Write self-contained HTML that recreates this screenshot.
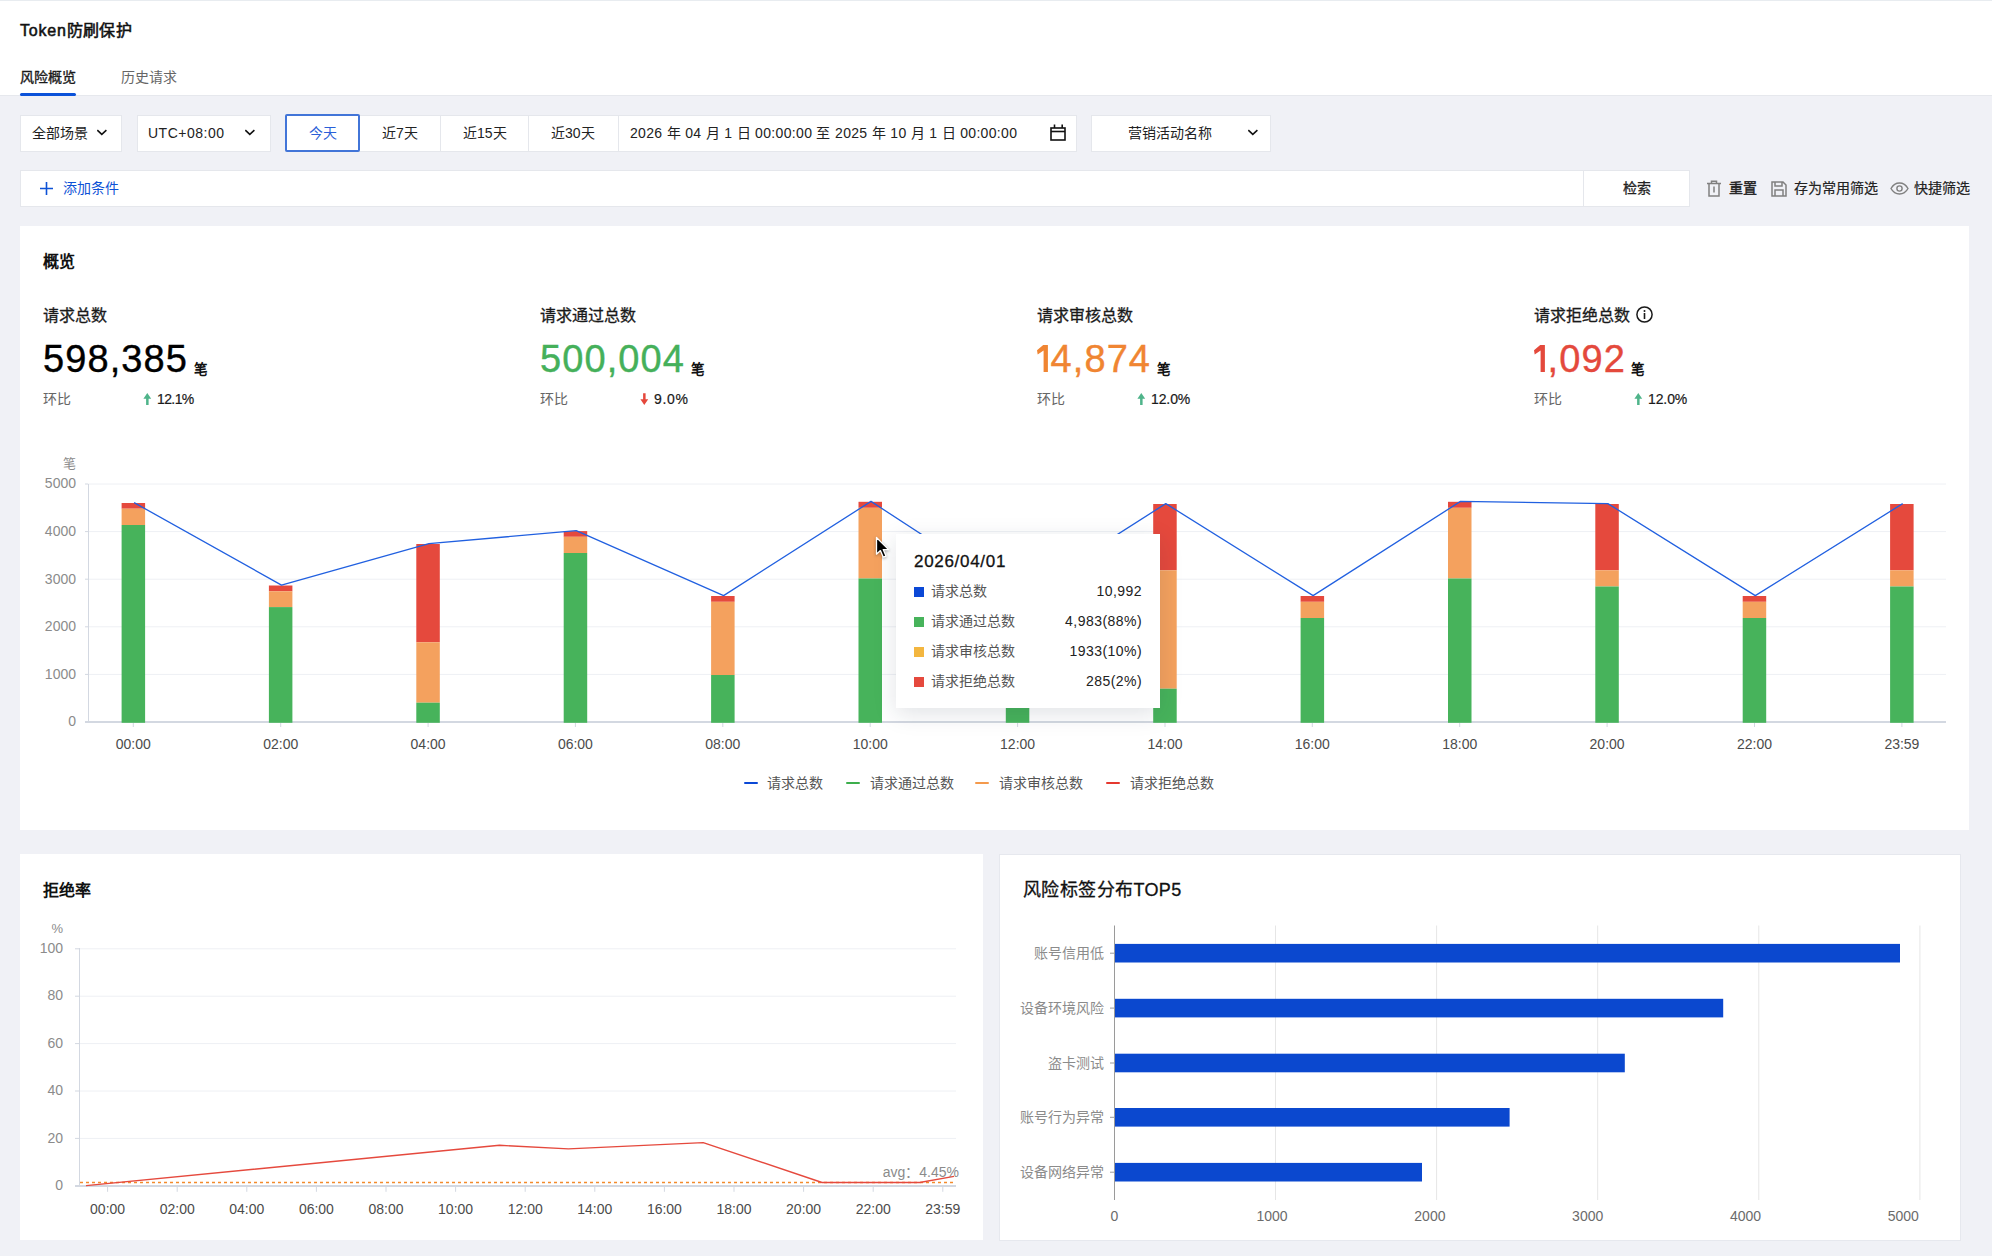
<!DOCTYPE html>
<html lang="zh-CN"><head><meta charset="utf-8"><title>Token防刷保护</title>
<style>
*{box-sizing:border-box;margin:0;padding:0}
html,body{width:1992px;height:1256px;overflow:hidden}
body{background:#f0f1f6;font-family:"Liberation Sans", sans-serif;color:rgba(0,0,0,.9);font-size:14px;position:relative}
.ab{position:absolute}
.t{position:absolute;white-space:nowrap;line-height:1}
.box{position:absolute;background:#fff;border:1px solid #e5e7ec}
.card{position:absolute;background:#fff}
.md{-webkit-text-stroke:0.3px currentColor}
svg text{font-family:"Liberation Sans", sans-serif}
</style></head><body>
<div class="ab" style="left:0;top:0;width:1992px;height:96px;background:#fff;border-top:1px solid #e8ecf0;border-bottom:1px solid #e6e8ed"></div>
<div class="t" style="left:20px;top:22.5px;font-size:16px;color:#111;-webkit-text-stroke:0.55px #111"><span style="letter-spacing:0.8px">Token</span><span style="letter-spacing:0.3px">防刷保护</span></div>
<div class="t" style="left:20px;top:70px;font-size:14px;color:#1a1a1a;-webkit-text-stroke:0.35px #1a1a1a">风险概览</div>
<div class="ab" style="left:19.5px;top:93px;width:56px;height:3px;background:#0b52d9;border-radius:1.5px"></div>
<div class="t" style="left:121px;top:70px;font-size:14px;color:#666">历史请求</div>

<div class="box" style="left:20px;top:115px;width:102px;height:37px"></div>
<div class="t" style="left:32px;top:126px;color:#222">全部场景</div>
<svg class="ab" style="left:96.5px;top:129px" width="11" height="7" viewBox="0 0 11 7"><path d="M0.3 1.2 L4.8 5.3 L9.4 1.2" fill="none" stroke="#111" stroke-width="1.6"/></svg>
<div class="box" style="left:137px;top:115px;width:134px;height:37px"></div>
<div class="t" style="left:148px;top:126px;color:#222;letter-spacing:0.5px">UTC+08:00</div>
<svg class="ab" style="left:244.5px;top:129px" width="11" height="7" viewBox="0 0 11 7"><path d="M0.3 1.2 L4.8 5.3 L9.4 1.2" fill="none" stroke="#111" stroke-width="1.6"/></svg>

<div class="box" style="left:285px;top:115px;width:792px;height:37px"></div>
<div class="ab" style="left:440px;top:116px;width:1px;height:35px;background:#e5e7ec"></div>
<div class="ab" style="left:528px;top:116px;width:1px;height:35px;background:#e5e7ec"></div>
<div class="ab" style="left:618px;top:116px;width:1px;height:35px;background:#e5e7ec"></div>
<div class="ab" style="left:285px;top:114px;width:75px;height:38px;border:2px solid #4275d8;border-radius:2px"></div>
<div class="t" style="left:309px;top:126px;color:#2a5fd8">今天</div>
<div class="t" style="left:382px;top:126px;color:#222">近7天</div>
<div class="t" style="left:463px;top:126px;color:#222">近15天</div>
<div class="t" style="left:551px;top:126px;color:#222">近30天</div>
<div class="t" style="left:630px;top:126px;color:#222;letter-spacing:0.33px">2026 年 04 月 1 日 00:00:00 至 2025 年 10 月 1 日 00:00:00</div>
<svg class="ab" style="left:1050px;top:124px" width="16" height="17" viewBox="0 0 16 17"><rect x="1" y="4" width="14" height="12" fill="none" stroke="#111" stroke-width="1.6"/><line x1="1" y1="7.5" x2="15" y2="7.5" stroke="#111" stroke-width="1.6"/><line x1="4.5" y1="0.5" x2="4.5" y2="4" stroke="#111" stroke-width="1.6"/><line x1="12.2" y1="0.5" x2="12.2" y2="4" stroke="#111" stroke-width="1.6"/></svg>

<div class="box" style="left:1091px;top:115px;width:180px;height:37px"></div>
<div class="t" style="left:1128px;top:126px;color:#222">营销活动名称</div>
<svg class="ab" style="left:1247.5px;top:129px" width="11" height="7" viewBox="0 0 11 7"><path d="M0.3 1.2 L4.8 5.3 L9.4 1.2" fill="none" stroke="#111" stroke-width="1.6"/></svg>

<div class="box" style="left:20px;top:170px;width:1670px;height:37px"></div>
<div class="ab" style="left:1583px;top:171px;width:1px;height:35px;background:#e5e7ec"></div>
<svg class="ab" style="left:40px;top:182px" width="13" height="13" viewBox="0 0 13 13"><path d="M6.5 0V13M0 6.5H13" stroke="#0d52d6" stroke-width="1.6"/></svg>
<div class="t" style="left:63px;top:181px;color:#0d52d6">添加条件</div>
<div class="t md" style="left:1623px;top:181px;color:#222">检索</div>
<svg class="ab" style="left:1706px;top:180px" width="16" height="17" viewBox="0 0 16 17"><path d="M1 3.5H15M5.5 3.5V1.2H10.5V3.5M3 3.5V16H13V3.5M8 6.5V12.5" fill="none" stroke="#808080" stroke-width="1.5"/></svg>
<div class="t md" style="left:1729px;top:181px;color:#222;-webkit-text-stroke:0.45px">重置</div>
<svg class="ab" style="left:1771px;top:181px" width="16" height="16" viewBox="0 0 16 16"><path d="M1 1H12L15 4V15H1Z M4 1V5H11V1 M4 15V9H12V15" fill="none" stroke="#808080" stroke-width="1.5"/></svg>
<div class="t md" style="left:1794px;top:181px;color:#222;-webkit-text-stroke:0.2px">存为常用筛选</div>
<svg class="ab" style="left:1890px;top:182px" width="19" height="13" viewBox="0 0 19 13"><path d="M1 6.5C3.5 2 6.5 1 9.5 1S15.5 2 18 6.5C15.5 11 12.5 12 9.5 12S3.5 11 1 6.5Z" fill="none" stroke="#808080" stroke-width="1.4"/><circle cx="9.5" cy="6.5" r="2.6" fill="none" stroke="#808080" stroke-width="1.4"/></svg>
<div class="t md" style="left:1914px;top:181px;color:#222;-webkit-text-stroke:0.2px">快捷筛选</div>

<div class="card" style="left:20px;top:226px;width:1949px;height:604px"></div>
<div class="t" style="left:43px;top:253.5px;font-size:16px;font-weight:700;color:#111">概览</div>
<div class="t md" style="left:43px;top:307.5px;font-size:16px;color:#1a1a1a">请求总数</div>
<div class="t" style="left:43px;top:338px;font-size:38px;color:#000;letter-spacing:1.1px;-webkit-text-stroke:0.4px #000;top:340px"><span>598,385</span><span style="font-size:13.5px;font-weight:700;color:#111;margin-left:5.5px;position:relative;top:1.5px;letter-spacing:0;-webkit-text-stroke:0">笔</span></div>
<div class="t" style="left:43px;top:392px;color:#666">环比</div>
<svg class="ab" style="left:143px;top:393px" width="9" height="13" viewBox="0 0 9 13"><path d="M4.3 0.1L8.2 5.8H5.6V12H3.1V5.8H0.4Z" fill="#4fb48a"/></svg>
<div class="t md" style="left:157px;top:391.5px;color:#1a1a1a;-webkit-text-stroke:0.2px;letter-spacing:-0.6px">12.1%</div>
<div class="t md" style="left:540px;top:307.5px;font-size:16px;color:#1a1a1a">请求通过总数</div>
<div class="t" style="left:540px;top:338px;font-size:38px;color:#45b05a;letter-spacing:1.1px;-webkit-text-stroke:0.4px #45b05a;top:340px"><span>500,004</span><span style="font-size:13.5px;font-weight:700;color:#111;margin-left:5.5px;position:relative;top:1.5px;letter-spacing:0;-webkit-text-stroke:0">笔</span></div>
<div class="t" style="left:540px;top:392px;color:#666">环比</div>
<svg class="ab" style="left:640px;top:393px" width="9" height="13" viewBox="0 0 9 13"><path d="M4.3 12L8.2 6.3H5.6V0.2H3.1V6.3H0.4Z" fill="#e5483c"/></svg>
<div class="t md" style="left:654px;top:391.5px;color:#1a1a1a;-webkit-text-stroke:0.2px;letter-spacing:0.7px">9.0%</div>
<div class="t md" style="left:1037px;top:307.5px;font-size:16px;color:#1a1a1a">请求审核总数</div>
<div class="t" style="left:1037px;top:338px;font-size:38px;color:#f08532;letter-spacing:1.1px;-webkit-text-stroke:0.4px #f08532;top:340px"><span><svg width="14.6" height="27.2" viewBox="0 0 14.6 27.2" style="display:inline-block;vertical-align:baseline;margin-right:-1.1px"><path d="M6.2 0H10.9V27.2H6.6V5.6L0.7 9.4L0 5.3Z" fill="#f08532"/></svg>4,874</span><span style="font-size:13.5px;font-weight:700;color:#111;margin-left:5.5px;position:relative;top:1.5px;letter-spacing:0;-webkit-text-stroke:0">笔</span></div>
<div class="t" style="left:1037px;top:392px;color:#666">环比</div>
<svg class="ab" style="left:1137px;top:393px" width="9" height="13" viewBox="0 0 9 13"><path d="M4.3 0.1L8.2 5.8H5.6V12H3.1V5.8H0.4Z" fill="#4fb48a"/></svg>
<div class="t md" style="left:1151px;top:391.5px;color:#1a1a1a;-webkit-text-stroke:0.2px;letter-spacing:-0.1px">12.0%</div>
<div class="t md" style="left:1534px;top:307.5px;font-size:16px;color:#1a1a1a">请求拒绝总数</div>
<div class="t" style="left:1534px;top:338px;font-size:38px;color:#e4493c;letter-spacing:1.1px;-webkit-text-stroke:0.4px #e4493c;top:340px"><span><svg width="14.6" height="27.2" viewBox="0 0 14.6 27.2" style="display:inline-block;vertical-align:baseline;margin-right:-1.1px"><path d="M6.2 0H10.9V27.2H6.6V5.6L0.7 9.4L0 5.3Z" fill="#e4493c"/></svg>,092</span><span style="font-size:13.5px;font-weight:700;color:#111;margin-left:5.5px;position:relative;top:1.5px;letter-spacing:0;-webkit-text-stroke:0">笔</span></div>
<div class="t" style="left:1534px;top:392px;color:#666">环比</div>
<svg class="ab" style="left:1634px;top:393px" width="9" height="13" viewBox="0 0 9 13"><path d="M4.3 0.1L8.2 5.8H5.6V12H3.1V5.8H0.4Z" fill="#4fb48a"/></svg>
<div class="t md" style="left:1648px;top:391.5px;color:#1a1a1a;-webkit-text-stroke:0.2px;letter-spacing:-0.1px">12.0%</div>
<svg class="ab" style="left:1636px;top:306px" width="17" height="17" viewBox="0 0 17 17"><circle cx="8.5" cy="8.5" r="7.6" fill="none" stroke="#1a1a1a" stroke-width="1.5"/><circle cx="8.5" cy="5" r="1" fill="#1a1a1a"/><rect x="7.7" y="7" width="1.6" height="6" fill="#1a1a1a"/></svg>
<svg class="ab" style="left:0;top:0" width="1992" height="1256"><line x1="88" y1="674.4" x2="1946" y2="674.4" stroke="#eef0f4" stroke-width="1"/><line x1="85" y1="674.4" x2="88" y2="674.4" stroke="#d3d8e1" stroke-width="1"/><text x="76" y="678.7" text-anchor="end" font-size="14" fill="#8b8b8b">1000</text><line x1="88" y1="626.8" x2="1946" y2="626.8" stroke="#eef0f4" stroke-width="1"/><line x1="85" y1="626.8" x2="88" y2="626.8" stroke="#d3d8e1" stroke-width="1"/><text x="76" y="631.1" text-anchor="end" font-size="14" fill="#8b8b8b">2000</text><line x1="88" y1="579.2" x2="1946" y2="579.2" stroke="#eef0f4" stroke-width="1"/><line x1="85" y1="579.2" x2="88" y2="579.2" stroke="#d3d8e1" stroke-width="1"/><text x="76" y="583.5" text-anchor="end" font-size="14" fill="#8b8b8b">3000</text><line x1="88" y1="531.6" x2="1946" y2="531.6" stroke="#eef0f4" stroke-width="1"/><line x1="85" y1="531.6" x2="88" y2="531.6" stroke="#d3d8e1" stroke-width="1"/><text x="76" y="535.9" text-anchor="end" font-size="14" fill="#8b8b8b">4000</text><line x1="88" y1="484.0" x2="1946" y2="484.0" stroke="#eef0f4" stroke-width="1"/><line x1="85" y1="484.0" x2="88" y2="484.0" stroke="#d3d8e1" stroke-width="1"/><text x="76" y="488.3" text-anchor="end" font-size="14" fill="#8b8b8b">5000</text><text x="76" y="726.3" text-anchor="end" font-size="14" fill="#8b8b8b">0</text><text x="76" y="468" text-anchor="end" font-size="13" fill="#8b8b8b">笔</text><line x1="88.5" y1="484" x2="88.5" y2="722.0" stroke="#d3d8e1" stroke-width="1"/><line x1="85" y1="722.0" x2="1946" y2="722.0" stroke="#d3d8e1" stroke-width="2"/><rect x="121.6" y="503.0" width="23.5" height="5.7" fill="#e5493d"/><rect x="121.6" y="508.7" width="23.5" height="16.3" fill="#f4a15e"/><rect x="121.6" y="525.0" width="23.5" height="197.8" fill="#47b35b"/><rect x="268.9" y="585.5" width="23.5" height="5.8" fill="#e5493d"/><rect x="268.9" y="591.3" width="23.5" height="15.8" fill="#f4a15e"/><rect x="268.9" y="607.1" width="23.5" height="115.7" fill="#47b35b"/><rect x="416.3" y="544.0" width="23.5" height="98.3" fill="#e5493d"/><rect x="416.3" y="642.3" width="23.5" height="60.4" fill="#f4a15e"/><rect x="416.3" y="702.7" width="23.5" height="20.1" fill="#47b35b"/><rect x="563.7" y="531.1" width="23.5" height="5.7" fill="#e5493d"/><rect x="563.7" y="536.8" width="23.5" height="16.2" fill="#f4a15e"/><rect x="563.7" y="553.0" width="23.5" height="169.8" fill="#47b35b"/><rect x="711.1" y="596.0" width="23.5" height="5.8" fill="#e5493d"/><rect x="711.1" y="601.8" width="23.5" height="73.2" fill="#f4a15e"/><rect x="711.1" y="675.0" width="23.5" height="47.8" fill="#47b35b"/><rect x="858.5" y="501.8" width="23.5" height="6.0" fill="#e5493d"/><rect x="858.5" y="507.8" width="23.5" height="70.7" fill="#f4a15e"/><rect x="858.5" y="578.5" width="23.5" height="144.3" fill="#47b35b"/><rect x="1005.8" y="598.0" width="23.5" height="6.0" fill="#e5493d"/><rect x="1005.8" y="604.0" width="23.5" height="36.0" fill="#f4a15e"/><rect x="1005.8" y="640.0" width="23.5" height="82.8" fill="#47b35b"/><rect x="1153.2" y="504.0" width="23.5" height="66.3" fill="#e5493d"/><rect x="1153.2" y="570.3" width="23.5" height="118.4" fill="#f4a15e"/><rect x="1153.2" y="688.7" width="23.5" height="34.1" fill="#47b35b"/><rect x="1300.6" y="596.0" width="23.5" height="5.8" fill="#e5493d"/><rect x="1300.6" y="601.8" width="23.5" height="16.2" fill="#f4a15e"/><rect x="1300.6" y="618.0" width="23.5" height="104.8" fill="#47b35b"/><rect x="1448.0" y="501.8" width="23.5" height="6.0" fill="#e5493d"/><rect x="1448.0" y="507.8" width="23.5" height="70.7" fill="#f4a15e"/><rect x="1448.0" y="578.5" width="23.5" height="144.3" fill="#47b35b"/><rect x="1595.3" y="504.0" width="23.5" height="66.3" fill="#e5493d"/><rect x="1595.3" y="570.3" width="23.5" height="16.2" fill="#f4a15e"/><rect x="1595.3" y="586.5" width="23.5" height="136.3" fill="#47b35b"/><rect x="1742.7" y="596.0" width="23.5" height="5.8" fill="#e5493d"/><rect x="1742.7" y="601.8" width="23.5" height="16.2" fill="#f4a15e"/><rect x="1742.7" y="618.0" width="23.5" height="104.8" fill="#47b35b"/><rect x="1890.1" y="504.0" width="23.5" height="66.3" fill="#e5493d"/><rect x="1890.1" y="570.3" width="23.5" height="16.2" fill="#f4a15e"/><rect x="1890.1" y="586.5" width="23.5" height="136.3" fill="#47b35b"/><line x1="133.3" y1="723.0" x2="133.3" y2="727.0" stroke="#d3d8e1" stroke-width="1"/><text x="133.3" y="748.5" text-anchor="middle" font-size="14" fill="#4b4b4b">00:00</text><line x1="280.7" y1="723.0" x2="280.7" y2="727.0" stroke="#d3d8e1" stroke-width="1"/><text x="280.7" y="748.5" text-anchor="middle" font-size="14" fill="#4b4b4b">02:00</text><line x1="428.1" y1="723.0" x2="428.1" y2="727.0" stroke="#d3d8e1" stroke-width="1"/><text x="428.1" y="748.5" text-anchor="middle" font-size="14" fill="#4b4b4b">04:00</text><line x1="575.4" y1="723.0" x2="575.4" y2="727.0" stroke="#d3d8e1" stroke-width="1"/><text x="575.4" y="748.5" text-anchor="middle" font-size="14" fill="#4b4b4b">06:00</text><line x1="722.8" y1="723.0" x2="722.8" y2="727.0" stroke="#d3d8e1" stroke-width="1"/><text x="722.8" y="748.5" text-anchor="middle" font-size="14" fill="#4b4b4b">08:00</text><line x1="870.2" y1="723.0" x2="870.2" y2="727.0" stroke="#d3d8e1" stroke-width="1"/><text x="870.2" y="748.5" text-anchor="middle" font-size="14" fill="#4b4b4b">10:00</text><line x1="1017.6" y1="723.0" x2="1017.6" y2="727.0" stroke="#d3d8e1" stroke-width="1"/><text x="1017.6" y="748.5" text-anchor="middle" font-size="14" fill="#4b4b4b">12:00</text><line x1="1165.0" y1="723.0" x2="1165.0" y2="727.0" stroke="#d3d8e1" stroke-width="1"/><text x="1165.0" y="748.5" text-anchor="middle" font-size="14" fill="#4b4b4b">14:00</text><line x1="1312.3" y1="723.0" x2="1312.3" y2="727.0" stroke="#d3d8e1" stroke-width="1"/><text x="1312.3" y="748.5" text-anchor="middle" font-size="14" fill="#4b4b4b">16:00</text><line x1="1459.7" y1="723.0" x2="1459.7" y2="727.0" stroke="#d3d8e1" stroke-width="1"/><text x="1459.7" y="748.5" text-anchor="middle" font-size="14" fill="#4b4b4b">18:00</text><line x1="1607.1" y1="723.0" x2="1607.1" y2="727.0" stroke="#d3d8e1" stroke-width="1"/><text x="1607.1" y="748.5" text-anchor="middle" font-size="14" fill="#4b4b4b">20:00</text><line x1="1754.5" y1="723.0" x2="1754.5" y2="727.0" stroke="#d3d8e1" stroke-width="1"/><text x="1754.5" y="748.5" text-anchor="middle" font-size="14" fill="#4b4b4b">22:00</text><line x1="1901.9" y1="723.0" x2="1901.9" y2="727.0" stroke="#d3d8e1" stroke-width="1"/><text x="1901.9" y="748.5" text-anchor="middle" font-size="14" fill="#4b4b4b">23:59</text><polyline points="134.1,502.6 281.5,585.1 428.9,543.6 576.2,530.7 723.6,595.6 871.0,501.4 1018.4,597.6 1165.8,503.6 1313.1,595.6 1460.5,501.4 1607.9,503.6 1755.3,595.6 1902.7,503.6" fill="none" stroke="#2160e0" stroke-width="1.3" stroke-linejoin="round"/></svg>
<div class="ab" style="left:744px;top:781.5px;width:14px;height:2px;border-radius:1px;background:#0b48d6"></div>
<div class="t" style="left:767px;top:776px;color:#555">请求总数</div>
<div class="ab" style="left:846px;top:781.5px;width:14px;height:2px;border-radius:1px;background:#3cae4c"></div>
<div class="t" style="left:870px;top:776px;color:#555">请求通过总数</div>
<div class="ab" style="left:975px;top:781.5px;width:14px;height:2px;border-radius:1px;background:#f49a4c"></div>
<div class="t" style="left:999px;top:776px;color:#555">请求审核总数</div>
<div class="ab" style="left:1106px;top:781.5px;width:14px;height:2px;border-radius:1px;background:#e5382f"></div>
<div class="t" style="left:1130px;top:776px;color:#555">请求拒绝总数</div>
<div class="ab" style="left:896px;top:534px;width:264px;height:174px;background:#fff;box-shadow:0 6px 22px rgba(20,35,65,.13)"></div>
<div class="t md" style="left:914px;top:553px;font-size:17px;color:#111;letter-spacing:0.7px">2026/04/01</div>
<div class="ab" style="left:914px;top:586.7px;width:10px;height:10px;background:#0b48d6"></div>
<div class="t" style="left:931px;top:584px;color:#555">请求总数</div>
<div class="t" style="right:850px;top:584px;color:#222;letter-spacing:0.45px">10,992</div>
<div class="ab" style="left:914px;top:616.7px;width:10px;height:10px;background:#47b35b"></div>
<div class="t" style="left:931px;top:614px;color:#555">请求通过总数</div>
<div class="t" style="right:850px;top:614px;color:#222;letter-spacing:0.45px">4,983(88%)</div>
<div class="ab" style="left:914px;top:646.7px;width:10px;height:10px;background:#f3b63f"></div>
<div class="t" style="left:931px;top:644px;color:#555">请求审核总数</div>
<div class="t" style="right:850px;top:644px;color:#222;letter-spacing:0.45px">1933(10%)</div>
<div class="ab" style="left:914px;top:676.7px;width:10px;height:10px;background:#e5493d"></div>
<div class="t" style="left:931px;top:674px;color:#555">请求拒绝总数</div>
<div class="t" style="right:850px;top:674px;color:#222;letter-spacing:0.45px">285(2%)</div>
<svg class="ab" style="left:872px;top:533px;filter:drop-shadow(0 1px 1.5px rgba(0,0,0,.35))" width="24" height="30" viewBox="0 0 24 30"><path d="M4.5 4.5V21.2L8.4 17.6L11.3 24.2L14 23.1L11.2 16.6H16.6Z" fill="#000" stroke="#fff" stroke-width="1.3" stroke-linejoin="round"/></svg>
<div class="card" style="left:20px;top:854px;width:963px;height:386px"></div>
<div class="t" style="left:43px;top:882.5px;font-size:16px;font-weight:700;color:#111">拒绝率</div>
<div class="card" style="left:999px;top:854px;width:962px;height:387px;border:1px solid #e6e8ee"></div>
<div class="t md" style="left:1023px;top:880.5px;font-size:18px;color:#111;letter-spacing:0.4px">风险标签分布TOP5</div>
<svg class="ab" style="left:0;top:0" width="1992" height="1256"><line x1="80" y1="1138.4" x2="956" y2="1138.4" stroke="#eef0f4" stroke-width="1"/><line x1="75" y1="1138.4" x2="80" y2="1138.4" stroke="#d3d8e1" stroke-width="1"/><text x="63" y="1142.6" text-anchor="end" font-size="14" fill="#8b8b8b">20</text><line x1="80" y1="1091.0" x2="956" y2="1091.0" stroke="#eef0f4" stroke-width="1"/><line x1="75" y1="1091.0" x2="80" y2="1091.0" stroke="#d3d8e1" stroke-width="1"/><text x="63" y="1095.2" text-anchor="end" font-size="14" fill="#8b8b8b">40</text><line x1="80" y1="1043.6" x2="956" y2="1043.6" stroke="#eef0f4" stroke-width="1"/><line x1="75" y1="1043.6" x2="80" y2="1043.6" stroke="#d3d8e1" stroke-width="1"/><text x="63" y="1047.8" text-anchor="end" font-size="14" fill="#8b8b8b">60</text><line x1="80" y1="996.2" x2="956" y2="996.2" stroke="#eef0f4" stroke-width="1"/><line x1="75" y1="996.2" x2="80" y2="996.2" stroke="#d3d8e1" stroke-width="1"/><text x="63" y="1000.4" text-anchor="end" font-size="14" fill="#8b8b8b">80</text><line x1="80" y1="948.8" x2="956" y2="948.8" stroke="#eef0f4" stroke-width="1"/><line x1="75" y1="948.8" x2="80" y2="948.8" stroke="#d3d8e1" stroke-width="1"/><text x="63" y="953.0" text-anchor="end" font-size="14" fill="#8b8b8b">100</text><text x="63" y="1190.0" text-anchor="end" font-size="14" fill="#8b8b8b">0</text><text x="63" y="933" text-anchor="end" font-size="13" fill="#8b8b8b">%</text><line x1="79.5" y1="948" x2="79.5" y2="1185.8" stroke="#d3d8e1" stroke-width="1"/><line x1="75" y1="1186.0" x2="956" y2="1186.0" stroke="#d3d8e1" stroke-width="2"/><line x1="107.6" y1="1186.8" x2="107.6" y2="1191.8" stroke="#d3d8e1" stroke-width="1"/><text x="107.6" y="1213.5" text-anchor="middle" font-size="14" fill="#4b4b4b">00:00</text><line x1="177.2" y1="1186.8" x2="177.2" y2="1191.8" stroke="#d3d8e1" stroke-width="1"/><text x="177.2" y="1213.5" text-anchor="middle" font-size="14" fill="#4b4b4b">02:00</text><line x1="246.8" y1="1186.8" x2="246.8" y2="1191.8" stroke="#d3d8e1" stroke-width="1"/><text x="246.8" y="1213.5" text-anchor="middle" font-size="14" fill="#4b4b4b">04:00</text><line x1="316.4" y1="1186.8" x2="316.4" y2="1191.8" stroke="#d3d8e1" stroke-width="1"/><text x="316.4" y="1213.5" text-anchor="middle" font-size="14" fill="#4b4b4b">06:00</text><line x1="386.0" y1="1186.8" x2="386.0" y2="1191.8" stroke="#d3d8e1" stroke-width="1"/><text x="386.0" y="1213.5" text-anchor="middle" font-size="14" fill="#4b4b4b">08:00</text><line x1="455.6" y1="1186.8" x2="455.6" y2="1191.8" stroke="#d3d8e1" stroke-width="1"/><text x="455.6" y="1213.5" text-anchor="middle" font-size="14" fill="#4b4b4b">10:00</text><line x1="525.2" y1="1186.8" x2="525.2" y2="1191.8" stroke="#d3d8e1" stroke-width="1"/><text x="525.2" y="1213.5" text-anchor="middle" font-size="14" fill="#4b4b4b">12:00</text><line x1="594.8" y1="1186.8" x2="594.8" y2="1191.8" stroke="#d3d8e1" stroke-width="1"/><text x="594.8" y="1213.5" text-anchor="middle" font-size="14" fill="#4b4b4b">14:00</text><line x1="664.4" y1="1186.8" x2="664.4" y2="1191.8" stroke="#d3d8e1" stroke-width="1"/><text x="664.4" y="1213.5" text-anchor="middle" font-size="14" fill="#4b4b4b">16:00</text><line x1="734.0" y1="1186.8" x2="734.0" y2="1191.8" stroke="#d3d8e1" stroke-width="1"/><text x="734.0" y="1213.5" text-anchor="middle" font-size="14" fill="#4b4b4b">18:00</text><line x1="803.6" y1="1186.8" x2="803.6" y2="1191.8" stroke="#d3d8e1" stroke-width="1"/><text x="803.6" y="1213.5" text-anchor="middle" font-size="14" fill="#4b4b4b">20:00</text><line x1="873.2" y1="1186.8" x2="873.2" y2="1191.8" stroke="#d3d8e1" stroke-width="1"/><text x="873.2" y="1213.5" text-anchor="middle" font-size="14" fill="#4b4b4b">22:00</text><line x1="942.8" y1="1186.8" x2="942.8" y2="1191.8" stroke="#d3d8e1" stroke-width="1"/><text x="942.8" y="1213.5" text-anchor="middle" font-size="14" fill="#4b4b4b">23:59</text><line x1="80" y1="1182.5" x2="956" y2="1182.5" stroke="#f38b2c" stroke-width="1.5" stroke-dasharray="3 3"/><polyline points="86,1185.6 499.5,1145.3 568.4,1148.9 703.2,1142.6 822,1182.5 919.7,1182.5 954,1176.4" fill="none" stroke="#e5493d" stroke-width="1.4" stroke-linejoin="round"/><text x="959" y="1177" text-anchor="end" font-size="14" fill="#8b8b8b">avg：4.45%</text><line x1="1275.5" y1="925.5" x2="1275.5" y2="1200" stroke="#e6e6e6" stroke-width="1"/><line x1="1436.6" y1="925.5" x2="1436.6" y2="1200" stroke="#e6e6e6" stroke-width="1"/><line x1="1597.7" y1="925.5" x2="1597.7" y2="1200" stroke="#e6e6e6" stroke-width="1"/><line x1="1758.8" y1="925.5" x2="1758.8" y2="1200" stroke="#e6e6e6" stroke-width="1"/><line x1="1919.9" y1="925.5" x2="1919.9" y2="1200" stroke="#e6e6e6" stroke-width="1"/><line x1="1114.5" y1="925.5" x2="1114.5" y2="1200" stroke="#9a9a9a" stroke-width="1"/><rect x="1115" y="943.9" width="785.0" height="18.6" fill="#0b48cf"/><line x1="1110" y1="953.2" x2="1114" y2="953.2" stroke="#9a9a9a" stroke-width="1"/><text x="1104" y="957.9" text-anchor="end" font-size="14" fill="#8b8b8b">账号信用低</text><rect x="1115" y="998.8" width="608.2" height="18.6" fill="#0b48cf"/><line x1="1110" y1="1008.1" x2="1114" y2="1008.1" stroke="#9a9a9a" stroke-width="1"/><text x="1104" y="1012.8" text-anchor="end" font-size="14" fill="#8b8b8b">设备环境风险</text><rect x="1115" y="1053.7" width="509.8" height="18.6" fill="#0b48cf"/><line x1="1110" y1="1063.0" x2="1114" y2="1063.0" stroke="#9a9a9a" stroke-width="1"/><text x="1104" y="1067.7" text-anchor="end" font-size="14" fill="#8b8b8b">盗卡测试</text><rect x="1115" y="1108.0" width="394.6" height="18.6" fill="#0b48cf"/><line x1="1110" y1="1117.3" x2="1114" y2="1117.3" stroke="#9a9a9a" stroke-width="1"/><text x="1104" y="1122.0" text-anchor="end" font-size="14" fill="#8b8b8b">账号行为异常</text><rect x="1115" y="1162.9" width="307.0" height="18.6" fill="#0b48cf"/><line x1="1110" y1="1172.2" x2="1114" y2="1172.2" stroke="#9a9a9a" stroke-width="1"/><text x="1104" y="1176.9" text-anchor="end" font-size="14" fill="#8b8b8b">设备网络异常</text><text x="1114.3" y="1220.5" text-anchor="middle" font-size="14" fill="#6b6b6b">0</text><text x="1272.1" y="1220.5" text-anchor="middle" font-size="14" fill="#6b6b6b">1000</text><text x="1429.9" y="1220.5" text-anchor="middle" font-size="14" fill="#6b6b6b">2000</text><text x="1587.7" y="1220.5" text-anchor="middle" font-size="14" fill="#6b6b6b">3000</text><text x="1745.5" y="1220.5" text-anchor="middle" font-size="14" fill="#6b6b6b">4000</text><text x="1903.3" y="1220.5" text-anchor="middle" font-size="14" fill="#6b6b6b">5000</text></svg>
</body></html>
